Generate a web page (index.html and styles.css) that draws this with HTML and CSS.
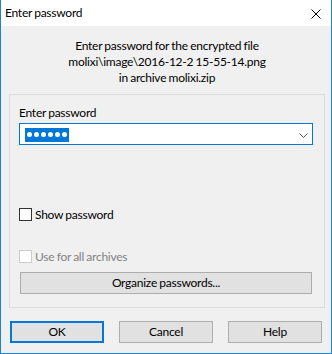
FILE: index.html
```html
<!DOCTYPE html>
<html>
<head>
<meta charset="utf-8">
<link rel="stylesheet" href="styles.css">
</head>
<body>
<div class="window">
  <div class="titlebar">
    <span class="title">Enter password</span>
    <svg class="close" width="10" height="10" viewBox="0 0 10 10"><path d="M0.5 0.5L9.5 9.5M9.5 0.5L0.5 9.5" stroke="#000" stroke-width="1" fill="none"/></svg>
  </div>
  <div class="body">
    <div class="info">
      <div>Enter password for the encrypted file</div>
      <div>molixi\image\2016-12-2 15-55-14.png</div>
      <div>in archive molixi.zip</div>
    </div>
    <div class="group">
      <div class="label">Enter password</div>
      <div class="combo">
        <span class="sel"><i></i><i></i><i></i><i></i><i></i><i></i></span>
        <svg class="chev" width="9" height="5" viewBox="0 0 9 5"><path d="M0.5 0.5L4.5 4.5L8.5 0.5" stroke="#555" stroke-width="1" fill="none"/></svg>
      </div>
      <div class="check show"><span class="box"></span><span>Show password</span></div>
      <div class="check disabled"><span class="box"></span><span>Use for all archives</span></div>
      <div class="btn organize">Organize passwords...</div>
    </div>
    <div class="buttons">
      <div class="btn default">OK</div>
      <div class="btn">Cancel</div>
      <div class="btn">Help</div>
    </div>
  </div>
</div>
</body>
</html>
```

FILE: styles.css
```css
* { box-sizing: border-box; }
html, body { margin: 0; padding: 0; background: #f0f0f0; }
body {
  font-family: "Lato", "Noto Sans", sans-serif;
  font-size: 12px;
  letter-spacing: -0.25px;
  word-spacing: -0.5px;
  line-height: 16px;
  color: #000;
}
.window {
  width: 332px;
  height: 354px;
  border: 1px solid #1883d7;
  border-top: none;
  background: #f0f0f0;
  display: flex;
  flex-direction: column;
}
.titlebar {
  height: 26px;
  background: #fff;
  display: flex;
  align-items: center;
  justify-content: space-between;
  padding: 0 10px 0 4px;
  flex: none;
}
.close { display: block; margin-top: 1px; }
.body {
  padding: 12px 6px 0 8px;
  display: flex;
  flex-direction: column;
}
.info {
  text-align: center;
  width: 316px;
}
.group {
  margin-top: 8px;
  width: 316px;
  height: 214px;
  border: 1px solid #dcdcdc;
  padding: 10px 0 0 9px;
  display: flex;
  flex-direction: column;
}
.label { height: 16px; }
.combo {
  margin-top: 2px;
  width: 294px;
  height: 22px;
  border: 1px solid #0078d7;
  background: #fff;
  display: flex;
  align-items: center;
  justify-content: space-between;
  padding: 0 4px 0 5px;
}
.sel {
  display: flex;
  align-items: center;
  gap: 2px;
  height: 14px;
  padding: 0 2px 0 2px;
  background: #0078d7;
  margin-top: 1px;
}
.sel i {
  display: block;
  width: 5px;
  height: 5px;
  border-radius: 50%;
  background: #fff;
}
.chev { display: block; margin-top: 2px; }
.check {
  display: flex;
  align-items: flex-start;
  height: 16px;
  gap: 3px;
}
.check .box {
  width: 13px;
  height: 13px;
  margin-top: 1px;
  border: 1px solid #333;
  background: #fff;
  flex: none;
}
.check.show { margin-top: 62px; }
.check.disabled { margin-top: 26px; color: #838383; }
.check.disabled .box { border-color: #cccccc; background: #fff; }
.btn {
  height: 22px;
  border: 1px solid #adadad;
  background: #e1e1e1;
  display: flex;
  align-items: center;
  justify-content: center;
}
.btn.organize {
  margin-top: 7px;
  margin-left: 1px;
  width: 292px;
}
.buttons {
  margin-top: 13px;
  display: flex;
  gap: 15px;
  padding-left: 1px;
}
.buttons .btn { width: 94px; }
.btn.default { border: 2px solid #0078d7; }
```
